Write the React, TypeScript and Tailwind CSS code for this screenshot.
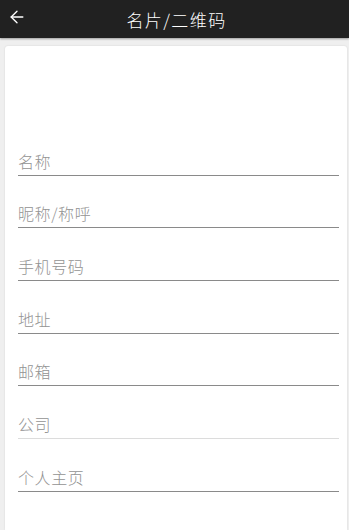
// Business card / QR code form — dark title bar over a white card of underlined fields.
import { ArrowLeft } from "lucide-react";

const fields = [
  { label: "名称", line: "border-[#8a8a8a]" },
  { label: "昵称/称呼", line: "border-[#8a8a8a]" },
  { label: "手机号码", line: "border-[#8a8a8a]" },
  { label: "地址", line: "border-[#8a8a8a]" },
  { label: "邮箱", line: "border-[#8a8a8a]" },
  { label: "公司", line: "border-[#dcdcdc]" },
  { label: "个人主页", line: "border-[#8a8a8a]" },
];

export default function App() {
  return (
    <div
      className="flex h-[530px] w-full flex-col overflow-hidden bg-[#efefef]"
      style={{ fontFamily: '"Noto Sans CJK SC", "Noto Sans", sans-serif' }}
    >
      <header className="relative flex h-[38px] shrink-0 items-center justify-center bg-[#212121] shadow-[0_1px_2px_rgba(0,0,0,0.35)]">
        <button type="button" className="absolute left-[7px] top-[7px] text-white">
          <ArrowLeft className="h-[20px] w-[20px]" strokeWidth={1.6} />
        </button>
        <h1 className="pl-[4px] text-[17px] font-light leading-none tracking-[1.4px] text-white">名片/二维码</h1>
      </header>

      <main className="ml-[5px] mr-[2px] mt-[8px] flex-1 rounded-t-[3px] bg-white pl-[13px] pr-[8px] pt-[77px] shadow-[0_0_2px_rgba(0,0,0,0.12)]">
        {fields.map((f) => (
          <div
            key={f.label}
            className={`flex h-[52.67px] items-end border-b ${f.line}`}
          >
            <span className="mb-[2px] text-[16px] font-light leading-[24px] tracking-[0.6px] text-[#939393]">{f.label}</span>
          </div>
        ))}
      </main>
    </div>
  );
}
